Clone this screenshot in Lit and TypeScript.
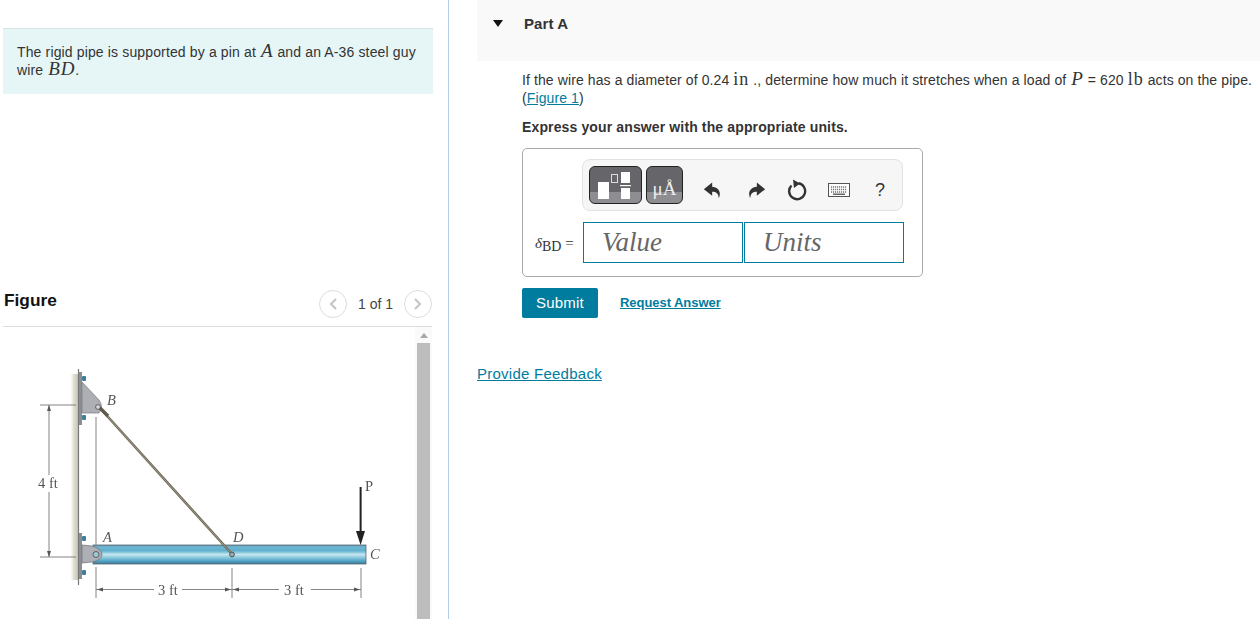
import { LitElement, html, css, svg } from "lit";
import { customElement } from "lit/decorators.js";

const figure = svg`
<defs>
  <linearGradient id="pipe" x1="0" y1="0" x2="0" y2="1">
    <stop offset="0" stop-color="#6f8d9f"/><stop offset=".1" stop-color="#6db6d2"/>
    <stop offset=".3" stop-color="#5fb0cf"/><stop offset=".5" stop-color="#c4e6ef"/>
    <stop offset=".62" stop-color="#9ad0e2"/><stop offset=".85" stop-color="#4da3c6"/>
    <stop offset="1" stop-color="#44748c"/>
  </linearGradient>
  <linearGradient id="wall" x1="0" y1="0" x2="1" y2="0">
    <stop offset="0" stop-color="#fbfaf6"/><stop offset=".45" stop-color="#dedbcd"/>
    <stop offset="1" stop-color="#c9c7bb"/>
  </linearGradient>
  <filter id="soft" x="-5%" y="-5%" width="110%" height="110%"><feGaussianBlur stdDeviation="0.35"/></filter>
</defs>
<g transform="translate(-3,-327)" filter="url(#soft)">
  <rect x="71" y="374" width="7" height="206" fill="url(#wall)"/>
  <line x1="78.5" y1="369" x2="78.5" y2="585" stroke="#77787a" stroke-width="1.2"/>
  <rect x="79" y="372" width="3" height="53" fill="#8c8e92"/>
  <rect x="79" y="533" width="3" height="46" fill="#8c8e92"/>
  <rect x="82" y="376" width="4" height="5" rx="1" fill="#3f7f95"/>
  <rect x="82" y="415" width="4" height="5" rx="1" fill="#3f7f95"/>
  <rect x="82" y="536" width="4" height="5" rx="1" fill="#3f7f95"/>
  <rect x="82" y="570" width="4" height="5" rx="1" fill="#3f7f95"/>
  <path d="M82 382 L99 400 Q104 407 99 413 L82 413 Z" fill="#adafb5" stroke="#77787c" stroke-width=".7"/>
  <rect x="93" y="545" width="273" height="19" fill="url(#pipe)" stroke="#56697a" stroke-width=".8"/>
  <path d="M82 545 L92 546 Q102 549 102 554.5 Q102 560 92 562 L82 563 Z" fill="#adafb5" stroke="#6f7074" stroke-width=".7"/>
  <circle cx="96" cy="554.5" r="3" fill="#9cc7d6" stroke="#555" stroke-width=".9"/>
  <line x1="99" y1="407" x2="232" y2="554" stroke="#6f6958" stroke-width="2.6"/>
  <line x1="99" y1="407" x2="232" y2="554" stroke="#aaa596" stroke-width=".8"/>
  <circle cx="98" cy="407" r="2.4" fill="#d8d8d8" stroke="#555" stroke-width=".9"/>
  <path d="M100 408 L108 416" stroke="#5f5a4c" stroke-width="3.4"/>
  <circle cx="232" cy="554.5" r="2.4" fill="#9aa" stroke="#555" stroke-width="1"/>

  <g stroke="#777" stroke-width=".9" fill="none">
    <line x1="40" y1="405" x2="76" y2="405"/><line x1="40" y1="557" x2="76" y2="557"/>
    <line x1="49" y1="405" x2="49" y2="475"/><line x1="49" y1="492" x2="49" y2="557"/>
    <line x1="96" y1="417" x2="96" y2="545"/><line x1="96" y1="567" x2="96" y2="598"/>
    <line x1="232" y1="568" x2="232" y2="598"/><line x1="361" y1="568" x2="361" y2="598"/>
    <line x1="96" y1="589.5" x2="154" y2="589.5"/><line x1="182" y1="589.5" x2="232" y2="589.5"/>
    <line x1="232" y1="589.5" x2="279" y2="589.5"/><line x1="311" y1="589.5" x2="361" y2="589.5"/>
  </g>
  <g fill="#555">
    <path d="M49 405 l-2 6 h4z M49 557 l-2 -6 h4z"/>
    <path d="M97 589.5 l6 -2 v4z M231 589.5 l-6 -2 v4z M233 589.5 l6 -2 v4z M360 589.5 l-6 -2 v4z"/>
  </g>
  <rect x="359.6" y="487" width="2" height="46" fill="#222"/>
  <path d="M356 531 L365 531 L360.6 545 Z" fill="#222"/>
  <g class="fig-text">
    <text x="38" y="488">4 ft</text>
    <text x="158" y="595">3 ft</text>
    <text x="284" y="595">3 ft</text>
    <text x="365" y="491">P</text>
  </g>
  <g class="fig-text fig-it">
    <text x="107" y="405">B</text>
    <text x="103" y="542">A</text>
    <text x="233" y="542">D</text>
    <text x="370" y="559">C</text>
  </g>
</g>`;

@customElement("app-root")
export class AppRoot extends LitElement {
  static styles = css`
    :host { display: block; width: 1260px; height: 619px; overflow: hidden; background: #fff;
      font-family: "Liberation Sans", Arial, sans-serif; font-size: 14px; line-height: 18px; color: #333; }
    .page { display: grid; grid-template-columns: 449px 1fr; height: 619px; }
    .left { border-right: 1px solid #b4cce4; padding: 28px 0 0 3px; display: flex; flex-direction: column; height: 591px; box-sizing: content-box; overflow: hidden; }
    .intro { width: 416px; padding: 14px 0 0 14px; box-sizing: content-box; margin: 0; background: #e6f6f7; border-top: 1px solid #d8e2e4; height: 51px; letter-spacing: .14px; }
    .math { font-family: "Liberation Serif", serif; font-style: italic; font-size: 19px; line-height: 0; letter-spacing: .8px; margin-left: 1px; }
    .unit { font-family: "Liberation Serif", serif; font-size: 18px; line-height: 0; letter-spacing: 1px; }
    .fig-head { width: 429px; height: 37px; margin-top: 195px; display: flex; align-items: flex-start; border-bottom: 1px solid #dcdcdc; box-sizing: content-box; }
    .fig-head h2 { margin: 0 0 0 1px; font-size: 17.3px; line-height: 22px; font-weight: 700; color: #111; flex: 1; }
    .pager { display: flex; align-items: center; gap: 11px; margin-top: 1px; color: #444; }
    .circle { width: 28px; height: 28px; box-sizing: border-box; border: 1px solid #ddd; border-radius: 50%; display: flex; align-items: center; justify-content: center; }
    .circle svg { display: block; }
    .stage { display: flex; width: 430px; height: 292px; }
    .stage svg.fig { width: 412px; height: 292px; flex: none; display: block; }
    .fig-text { font-family: "Liberation Serif", serif; font-size: 14.5px; fill: #555; }
    .fig-it { font-style: italic; }
    .scroll { width: 17px; display: flex; flex-direction: column; align-items: center; background: #fafafa; }
    .scroll .up { width: 0; height: 0; border: 4px solid transparent; border-top: 0; border-bottom: 5px solid #a8a8a8; margin-top: 6px; margin-bottom: 5px; }
    .scroll .thumb { width: 13px; flex: 1; background: #bdbdbd; }

    .right { padding-left: 28px; min-width: 0; }
    .part-head { height: 61px; background: #f9f9f9; display: flex; align-items: flex-start; padding: 15px 0 0 16px; box-sizing: border-box; }
    .tri { width: 0; height: 0; border: 5px solid transparent; border-top: 7px solid #111; border-bottom: 0; margin-top: 5px; }
    .part-head h3 { margin: 0 0 0 21px; font-size: 15px; line-height: 18px; font-weight: 700; color: #333; letter-spacing: .1px; }
    .body { padding-left: 45px; }
    .q { margin: 10px 0 0; letter-spacing: .1px; white-space: nowrap; }
    .q a, .fb { color: #007c9e; text-decoration: underline; }
    .ask { margin: 11px 0 0; font-weight: 700; letter-spacing: .13px; }
    .answer { width: 401px; height: 129px; box-sizing: border-box; margin-top: 12px; border: 1px solid #aaa; border-radius: 5px; padding: 10px 0 0 59px; }
    .toolbar { width: 321px; height: 52px; box-sizing: border-box; border: 1px solid #e2e2e2; border-radius: 8px; background: #f6f6f6; display: flex; align-items: flex-start; padding: 6px 0 0 6px; }
    .tbtn { height: 38px; box-sizing: border-box; border: 1px solid #222; border-radius: 6px; background: linear-gradient(#66666a 0, #66666a 70%, #8d8d92 70%, #8d8d92 100%); display: flex; justify-content: center; margin-right: 4px; color: #eee; }
    .t1 { width: 53px; }
    .t2 { width: 37px; font-family: "Liberation Serif", serif; font-size: 19px; line-height: 44px; }
    .t1 svg { display: block; }
    .tools { display: flex; align-items: center; height: 38px; margin: 5px 0 0 16px; }
    .tools svg { display: block; flex: none; }
    .q-mark { font-size: 18px; color: #333; margin-left: 25px; }
    .row { display: flex; align-items: center; margin: 11px 0 0 -47px; }
    .label { width: 48px; padding: 0 11px 0 0; box-sizing: border-box; text-align: right; font-family: "Liberation Serif", serif; font-size: 15px; white-space: nowrap; color: #333; }
    .label sub { font-size: 14px; line-height: 0; vertical-align: -3px; }
    .box { height: 41px; width: 160px; box-sizing: border-box; border: 1px solid #007c9e; font-family: "Liberation Serif", serif; font-style: italic; font-size: 27px; line-height: 38px; color: #666; padding-left: 18px; }
    .box + .box { margin-left: 1px; }
    .actions { display: flex; align-items: center; margin-top: 11px; }
    .submit { width: 76px; height: 30px; border-radius: 2px; background: #007c9e; color: #fff; font-size: 15px; line-height: 29px; text-align: center; letter-spacing: .2px; }
    .req { margin-left: 22px; color: #007c9e; font-weight: 700; font-size: 13px; text-decoration: underline; letter-spacing: -.05px; }
    .fb { display: inline-block; margin-top: 47px; font-size: 15px; letter-spacing: .25px; }
  `;

  render() {
    return html`
      <div class="page">
        <section class="left">
          <p class="intro">The rigid pipe is supported by a pin at <span class="math">A</span> and an A-36 steel guy wire <span class="math">BD</span>.</p>
          <div class="fig-head">
            <h2>Figure</h2>
            <div class="pager">
              <span class="circle"><svg width="10" height="14" viewBox="0 0 10 14"><path d="M8 2 L3 7 L8 12" fill="none" stroke="#c4c4c4" stroke-width="2"/></svg></span>
              <span>1 of 1</span>
              <span class="circle"><svg width="10" height="14" viewBox="0 0 10 14"><path d="M2 2 L7 7 L2 12" fill="none" stroke="#c4c4c4" stroke-width="2"/></svg></span>
            </div>
          </div>
          <div class="stage">
            <svg class="fig" viewBox="0 0 412 292">${figure}</svg>
            <div class="scroll"><div class="up"></div><div class="thumb"></div></div>
          </div>
        </section>
        <main class="right">
          <header class="part-head"><span class="tri"></span><h3>Part A</h3></header>
          <div class="body">
            <p class="q">If the wire has a diameter of 0.24 <span class="unit">in</span> ., determine how much it stretches when a load of <span class="math">P</span> = 620 <span class="unit">lb</span> acts on the pipe.<br>(<a>Figure 1</a>)</p>
            <p class="ask">Express your answer with the appropriate units.</p>
            <div class="answer">
              <div class="toolbar">
                <div class="tbtn t1">
                  <svg width="51" height="36" viewBox="0 0 51 36">
                    <rect x="8" y="15" width="11" height="17" fill="#fff"/>
                    <rect x="21.5" y="7.5" width="6" height="8" fill="none" stroke="#ddd"/>
                    <rect x="31" y="5" width="9" height="11" fill="#fff"/>
                    <rect x="30" y="18" width="11" height="1.2" fill="#fff"/>
                    <rect x="31" y="21" width="9" height="11" fill="#fff"/>
                  </svg>
                </div>
                <div class="tbtn t2">μÅ</div>
                <div class="tools">
                  <svg width="20" height="20" viewBox="0 0 24 24"><path d="M11 8V3L1 11l10 8v-5c5 0 7.500 2 8 8 3-7 .5-13-8-14z" fill="#333"/></svg>
                  <svg style="margin-left:23px" width="20" height="20" viewBox="0 0 24 24"><path d="M13 8V3l10 8-10 8v-5c-5 0-7.500 2-8 8-3-7-.5-13 8-14z" fill="#333"/></svg>
                  <svg style="margin-left:21px" width="20" height="22" viewBox="0 0 20 22"><path d="M11.500 4.300 A8 8 0 1 1 4.500 6.500" fill="none" stroke="#333" stroke-width="2.400"/><path d="M6 .5 L13 4.500 L7 9 Z" fill="#333"/></svg>
                  <svg style="margin-left:21px" width="22" height="14" viewBox="0 0 22 14"><rect x=".5" y=".5" width="21" height="13" fill="#fff" stroke="#555"/><path d="M3 4h16M3 6.500h16M3 9h16" stroke="#777" stroke-dasharray="1.200 .8" stroke-width="1.400"/><rect x="5" y="10.500" width="12" height="1.500" fill="#666"/></svg>
                  <span class="q-mark">?</span>
                </div>
              </div>
              <div class="row">
                <span class="label"><i>δ</i><sub>BD</sub> =</span>
                <div class="box">Value</div>
                <div class="box">Units</div>
              </div>
            </div>
            <div class="actions"><div class="submit">Submit</div><a class="req">Request Answer</a></div>
          </div>
          <a class="fb">Provide Feedback</a>
        </main>
      </div>`;
  }
}
